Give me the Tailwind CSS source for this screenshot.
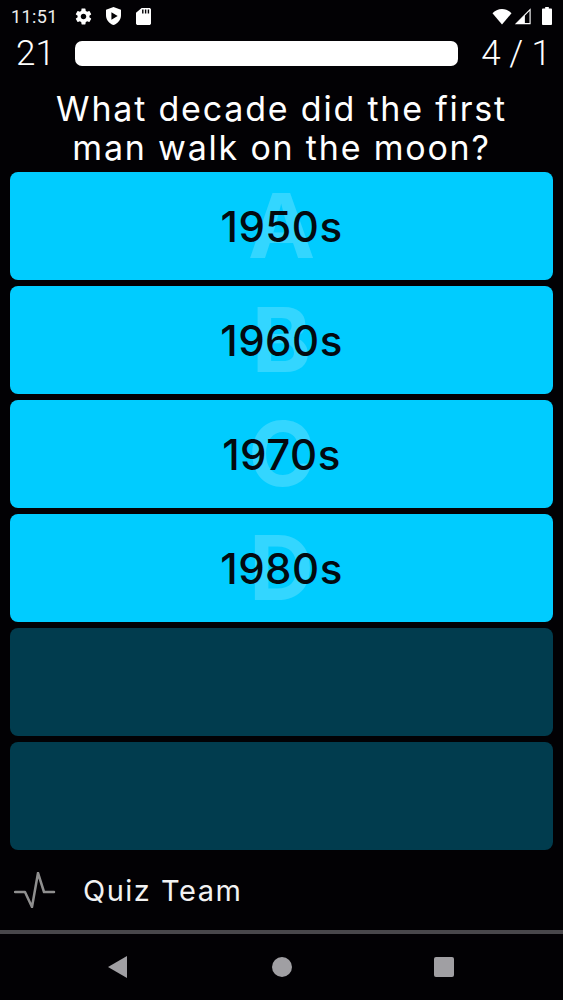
<!DOCTYPE html>
<html lang="en">
<head>
    <meta charset="UTF-8">
    <title>Quiz</title>
    <script src="https://cdn.jsdelivr.net/npm/@tailwindcss/browser@4"></script>
</head>
<body class="bg-[#020104] w-[563px] h-[1000px] overflow-hidden font-['Inter',sans-serif] text-white">
    <!-- status bar -->
    <div class="h-[32px] flex items-center pl-[11px] pr-[11px] font-['Roboto',sans-serif] text-[#eeeeee]">
        <span class="text-[18px] tracking-[0.4px] w-[63px]">11:51</span>
        <svg class="w-[19px] h-[19px]" viewBox="0 0 24 24" fill="#fff"><path d="M19.43 12.98c.04-.32.07-.64.07-.98s-.03-.66-.07-.98l2.11-1.65c.19-.15.24-.42.12-.64l-2-3.46c-.12-.22-.39-.3-.61-.22l-2.49 1c-.52-.4-1.08-.73-1.69-.98l-.38-2.65A.49.49 0 0 0 14 2h-4c-.25 0-.46.18-.49.42l-.38 2.65c-.61.25-1.17.59-1.69.98l-2.49-1c-.23-.09-.49 0-.61.22l-2 3.46c-.13.22-.07.49.12.64l2.11 1.65c-.04.32-.07.65-.07.98s.03.66.07.98l-2.11 1.65c-.19.15-.24.42-.12.64l2 3.46c.12.22.39.3.61.22l2.49-1c.52.4 1.08.73 1.69.98l.38 2.65c.03.24.24.42.49.42h4c.25 0 .46-.18.49-.42l.38-2.65c.61-.25 1.17-.59 1.69-.98l2.49 1c.23.09.49 0 .61-.22l2-3.46c.12-.22.07-.49-.12-.64l-2.11-1.65zM12 15.5c-1.93 0-3.5-1.57-3.5-3.5s1.57-3.500 3.500-3.500 3.500 1.570 3.500 3.500-1.570 3.500-3.500 3.500z"/></svg>
        <svg class="w-[15px] h-[18px] ml-[13px]" viewBox="3 1 18 22" preserveAspectRatio="none" fill="#fff"><path fill-rule="evenodd" d="M12 1 3 4.500v6.600c0 5.500 3.800 10.300 9 11.900 5.200-1.600 9-6.400 9-11.900V4.500L12 1zM9.500 7.500v9l7.500-4.500-7.500-4.500z"/></svg>
        <svg class="w-[15px] h-[17px] ml-[15px]" viewBox="4 1 16 22" preserveAspectRatio="none" fill="#fff"><path fill-rule="evenodd" d="M18 1h-8L4 7v14c0 1.100.9 2 2 2h12c1.100 0 2-.9 2-2V3c0-1.100-.9-2-2-2zM12 3h-1.500v5H12V3zm3 0h-1.500v5H15V3zm3 0h-1.500v5H18V3z"/></svg>
        <div class="ml-auto flex items-center">
            <svg class="w-[20px] h-[17px]" viewBox="0 0 21 18" preserveAspectRatio="none" fill="#fff"><path d="M10.500 17.500 .5 5.500C3 3 6.500 1 10.500 1S18 3 20.500 5.500L10.500 17.500z"/></svg>
            <svg class="w-[18px] h-[17px] ml-[2px]" viewBox="0 0 18 18" fill="none" stroke="#fff" stroke-width="1.200"><path d="M16.500 1.800V16.500H1.800L16.500 1.800z"/><path d="M11 7.500V16.500H2l9-9z" fill="#fff" stroke="none"/></svg>
            <svg class="w-[10px] h-[18px] ml-[10px]" viewBox="0 0 11 18" preserveAspectRatio="none" fill="#fff"><path d="M3.500 0h4v1.500H10c.5 0 1 .5 1 1V17c0 .5-.5 1-1 1H1c-.5 0-1-.5-1-1V2.500c0-.5.5-1 1-1h2.500z"/></svg>
        </div>
    </div>

    <!-- timer, progress, score -->
    <div class="h-[42px] flex items-center font-['Roboto',sans-serif] font-light text-[35px]">
        <span class="w-[75px] pl-[16px] leading-none">21</span>
        <div class="w-[383px] h-[25px] bg-white rounded-[7px]"></div>
        <span class="flex-1 text-right pr-[12px] leading-none whitespace-nowrap">4 / 1</span>
    </div>

    <!-- question -->
    <h1 class="h-[98px] pt-[15px] px-[50px] text-center text-[34px] leading-[39px] tracking-[1.800px] font-normal">What decade did the first man walk on the moon?</h1>

    <!-- answers -->
    <div class="px-[10px] flex flex-col gap-[6px]">
        <div class="relative h-[108px] rounded-[8px] bg-[#00ccff] flex items-center justify-center">
            <span class="absolute text-[90px] font-bold leading-none text-white/20">A</span>
            <span class="relative text-[42px] tracking-[0.5px] text-[#030a10] font-medium">1950s</span>
        </div>
        <div class="relative h-[108px] rounded-[8px] bg-[#00ccff] flex items-center justify-center">
            <span class="absolute text-[90px] font-bold leading-none text-white/20">B</span>
            <span class="relative text-[42px] tracking-[0.5px] text-[#030a10] font-medium">1960s</span>
        </div>
        <div class="relative h-[108px] rounded-[8px] bg-[#00ccff] flex items-center justify-center">
            <span class="absolute text-[90px] font-bold leading-none text-white/20">C</span>
            <span class="relative text-[42px] tracking-[0.5px] text-[#030a10] font-medium">1970s</span>
        </div>
        <div class="relative h-[108px] rounded-[8px] bg-[#00ccff] flex items-center justify-center">
            <span class="absolute text-[90px] font-bold leading-none text-white/20">D</span>
            <span class="relative text-[42px] tracking-[0.5px] text-[#030a10] font-medium">1980s</span>
        </div>
        <div class="h-[108px] rounded-[8px] bg-[#013c4e]"></div>
        <div class="h-[108px] rounded-[8px] bg-[#013c4e]"></div>
    </div>

    <!-- footer -->
    <div class="h-[80px] flex items-center pl-[14px]">
        <svg class="w-[42px] h-[36px]" viewBox="0 0 42 36" fill="none" stroke="#8f8f8f" stroke-width="2.500" stroke-linejoin="round" stroke-linecap="round"><path d="M1 20h10l7 15 6-34 6 19h10"/></svg>
        <span class="ml-[27px] mt-[2px] text-[29px] tracking-[1.500px] text-[#f2f2f2]">Quiz Team</span>
    </div>
    <div class="h-[4px] bg-[#48474b]"></div>

    <!-- nav bar -->
    <div class="relative h-[66px]">
        <svg class="absolute left-[107px] top-[22px] w-[21px] h-[22px]" viewBox="0 0 21 22" fill="#a09fa3"><path d="M20 0v22L1 11z"/></svg>
        <div class="absolute left-[272px] top-[23px] w-[20px] h-[20px] rounded-full bg-[#a09fa3]"></div>
        <div class="absolute left-[434px] top-[23px] w-[20px] h-[20px] rounded-[2px] bg-[#a09fa3]"></div>
    </div>
</body>
</html>
